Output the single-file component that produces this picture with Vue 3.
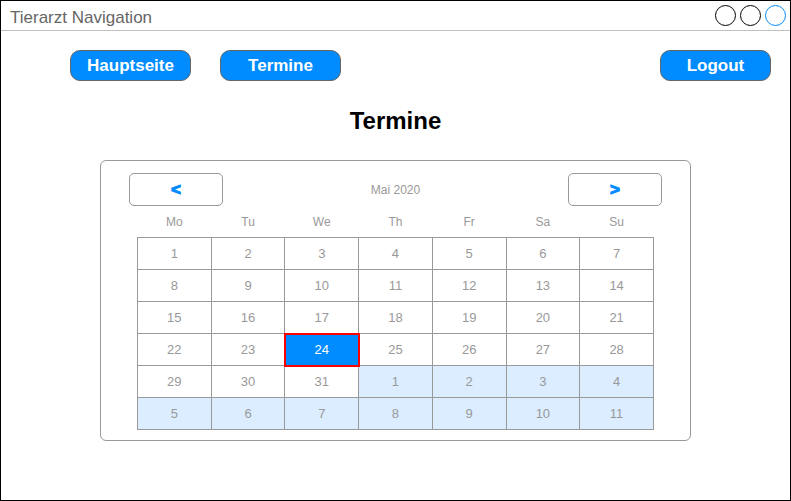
<script setup>
import { ref, computed } from 'vue'

const weekdays = ['Mo', 'Tu', 'We', 'Th', 'Fr', 'Sa', 'Su']
const daysInMonth = 31
const selected = ref(24)

const weeks = computed(() =>
  Array.from({ length: 6 }, (_, w) =>
    Array.from({ length: 7 }, (_, d) => {
      const n = w * 7 + d + 1
      return n > daysInMonth
        ? { key: n, day: n - daysInMonth, next: true }
        : { key: n, day: n, next: false }
    })
  )
)

function select(cell) {
  if (!cell.next) selected.value = cell.day
}
</script>

<template>
  <div class="window">
    <header class="titlebar">
      <span class="title">Tierarzt Navigation</span>
      <div class="controls">
        <span class="circle"></span>
        <span class="circle"></span>
        <span class="circle active"></span>
      </div>
    </header>

    <nav class="menu">
      <button type="button" class="pill">Hauptseite</button>
      <button type="button" class="pill">Termine</button>
      <button type="button" class="pill logout">Logout</button>
    </nav>

    <main>
      <h1>Termine</h1>
      <section class="calendar">
        <div class="month-bar">
          <button type="button" class="arrow">&lt;</button>
          <span class="month">Mai 2020</span>
          <button type="button" class="arrow">&gt;</button>
        </div>
        <table>
          <thead>
            <tr>
              <th v-for="name in weekdays" :key="name" scope="col">{{ name }}</th>
            </tr>
          </thead>
          <tbody>
            <tr v-for="(week, i) in weeks" :key="i">
              <td
                v-for="cell in week"
                :key="cell.key"
                :class="{ next: cell.next, selected: !cell.next && cell.day === selected }"
                @click="select(cell)"
              >{{ cell.day }}</td>
            </tr>
          </tbody>
        </table>
      </section>
    </main>
  </div>
</template>

<style>
body {
  background: #fff;
}
</style>

<style scoped>
.window {
  box-sizing: border-box;
  min-height: 100vh;
  border: 1px solid #000;
  background: #fff;
  font-family: "Liberation Sans", Arial, sans-serif;
}

.titlebar {
  display: flex;
  align-items: center;
  justify-content: space-between;
  height: 29px;
  padding: 0 4px 0 9px;
  border-bottom: 1px solid #c0c0c0;
}

.title {
  padding-top: 4px;
  color: #666;
  font-size: 17px;
  line-height: 20px;
}

.controls {
  display: flex;
  gap: 4px;
}

.circle {
  box-sizing: border-box;
  width: 21px;
  height: 21px;
  border: 1px solid #000;
  border-radius: 50%;
}

.circle.active {
  border-color: #008cff;
}

.menu {
  display: flex;
  gap: 29px;
  padding: 19px 19px 0 69px;
}

.pill {
  box-sizing: border-box;
  width: 121px;
  height: 31px;
  padding: 0;
  border: 1px solid #666;
  border-radius: 10px;
  background: #008cff;
  color: #fff;
  font-family: inherit;
  font-size: 17px;
  font-weight: bold;
  line-height: 20px;
}

.pill.logout {
  width: 111px;
  margin-left: auto;
}

h1 {
  margin: 26px 0 25px;
  color: #000;
  font-size: 24px;
  line-height: 28px;
  text-align: center;
}

.calendar {
  margin: 0 99px;
  padding: 12px 28px 10px;
  border: 1px solid #999;
  border-radius: 6px;
  color: #999;
  font-size: 12px;
  line-height: 16px;
}

.month-bar {
  display: flex;
  align-items: center;
  justify-content: space-between;
}

.arrow {
  box-sizing: border-box;
  width: 94px;
  height: 33px;
  padding: 0;
  border: 1px solid #999;
  border-radius: 5px;
  background: #fff;
  color: #008cff;
  font-family: inherit;
  font-size: 17px;
  font-weight: bold;
  line-height: 20px;
  -webkit-text-stroke: 1px #008cff;
}

.calendar table {
  width: calc(100% - 16px);
  margin: 0 8px;
  border-collapse: collapse;
  table-layout: fixed;
}

th {
  height: 31px;
  padding: 0;
  font-weight: normal;
}

td {
  height: 31px;
  padding: 0;
  border: 1px solid #999;
  font-size: 13px;
  text-align: center;
}

td.next {
  background: #dbedff;
}

td.selected {
  outline: 2px solid #f00;
  outline-offset: -1px;
  background: #008cff;
  color: #fff;
}
</style>
